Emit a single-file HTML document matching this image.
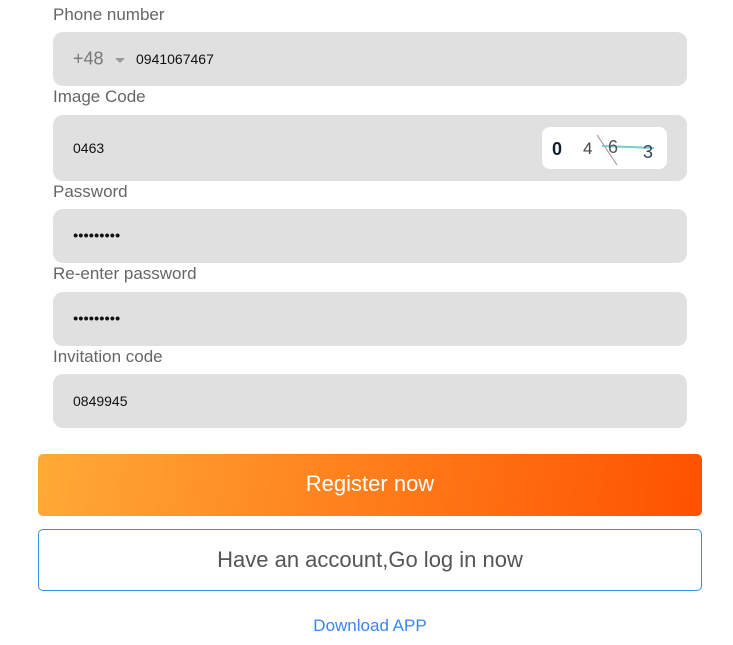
<!DOCTYPE html>
<html><head><meta charset="utf-8"><style>
*{margin:0;padding:0;box-sizing:border-box}
body{width:733px;height:645px;background:#fff;font-family:"Liberation Sans",sans-serif;position:relative;overflow:hidden}
.l{position:absolute;left:53px;font-size:17px;color:#666;line-height:18px}
.b{position:absolute;left:53px;width:634px;background:#e0e0e0;border-radius:10px;font-size:14px;color:#111}
.b span{position:absolute;left:20px;top:50%;transform:translateY(-50%)}
.btn{position:absolute;left:38px;width:664px;height:62px;border-radius:5px;text-align:center;line-height:60px;font-size:22px}
</style></head><body>
<div class="l" style="top:6px">Phone number</div>
<div class="b" style="top:32px;height:54px"><span style="color:#777;font-size:18px">+48</span>
<span style="left:62px;width:0;height:0;border-left:5px solid transparent;border-right:5px solid transparent;border-top:5px solid #999;transform:none;top:26px"></span>
<span style="left:83px">0941067467</span></div>
<div class="l" style="top:88px">Image Code</div>
<div class="b" style="top:115px;height:66px"><span>0463</span>
<div style="position:absolute;left:489px;top:12px;width:125px;height:42px;background:#fff;border-radius:8px;font-size:18px;color:#334;letter-spacing:0">
<svg width="125" height="42" style="position:absolute;left:0;top:0"><line x1="55" y1="8" x2="75" y2="38" stroke="#a88" stroke-width="1"/><line x1="60" y1="19" x2="112" y2="21" stroke="#7cc" stroke-width="2"/>
<text x="10" y="28" font-family="Liberation Sans" font-size="18" fill="#123" font-weight="bold">0</text><text x="41" y="27" font-family="Liberation Sans" font-size="17" fill="#444">4</text><text x="66" y="26" font-family="Liberation Sans" font-size="18" fill="#555">6</text><text x="101" y="31" font-family="Liberation Sans" font-size="18" fill="#345">3</text></svg></div></div>
<div class="l" style="top:183px">Password</div>
<div class="b" style="top:209px;height:54px"><span style="font-size:15px">•••••••••</span></div>
<div class="l" style="top:265px">Re-enter password</div>
<div class="b" style="top:292px;height:54px"><span style="font-size:15px">•••••••••</span></div>
<div class="l" style="top:348px">Invitation code</div>
<div class="b" style="top:374px;height:54px"><span>0849945</span></div>
<div class="btn" style="top:454px;color:#fff;background:linear-gradient(100deg,#ffaa36,#ff5100)">Register now</div>
<div class="btn" style="top:529px;border:1px solid #3a8ef0;color:#555">Have an account,Go log in now</div>
<div style="position:absolute;top:616px;left:0;width:740px;text-align:center;color:#3a86f0;font-size:17px">Download APP</div>
</body></html>
